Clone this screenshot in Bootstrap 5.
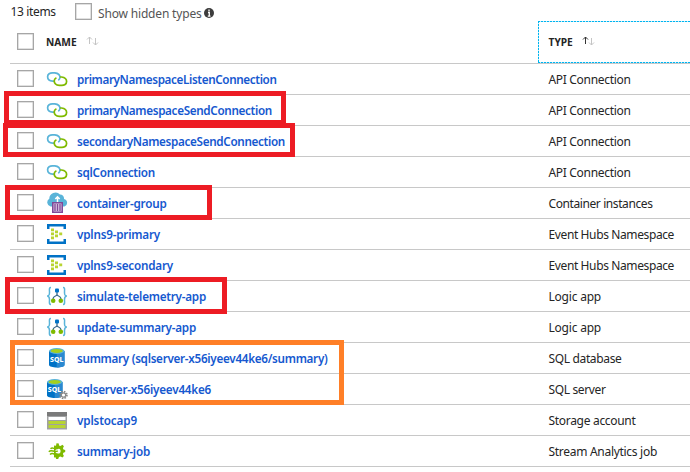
<!DOCTYPE html>
<html lang="en">
<head>
<meta charset="utf-8">
<title>Resources</title>
<link href="https://cdn.jsdelivr.net/npm/bootstrap@5.3.0/dist/css/bootstrap.min.css" rel="stylesheet">
<style>
body{font-family:"Noto Sans","Open Sans",sans-serif;font-size:12px;line-height:16px;color:#252525;width:690px;height:472px;overflow:hidden}
.topbar{height:21px;padding-left:10.5px}
.tick{width:17px;height:17px;border:1px solid #a6a6a6;box-shadow:inset 0 0 0 .5px #c4c4c4;border-radius:0;margin:0;flex:none;display:block;appearance:none;background:#fff}
.topbar .tick{margin-top:3px}
.count{width:64.5px;padding-top:4px;letter-spacing:-.35px}
.hidden-label{color:#555;padding:6px 2px 0 6px;letter-spacing:-.17px}
.grid-area{margin-left:10px}
.line{border-bottom:1px solid #c8c8c8;height:31px;padding-left:7px}
.line .tick{margin-top:6px}
.head-line{height:43px;font-weight:700;font-size:10.2px}
.head-line .tick{margin-top:12px}
.head-text{line-height:16px;padding-top:13px}
.col-head{width:521px;flex:none}
.col-name{width:531.5px;flex:none}
.glyph{width:22px;height:22px;margin:4px 9px 0 12px;flex:none}
.res,.kind{white-space:nowrap;padding-top:8px}
.res{color:#1558cf;font-size:11.7px;font-weight:600;text-decoration:none;padding-top:7px}
.arrows{margin:15px 0 0 9px}
.type-head{height:42px;width:152px;flex:1 0 auto;padding-left:10.5px;
background:repeating-linear-gradient(90deg,#00b4f0 0 2px,#c4eefb 2px 3px) 0 0/100% 1px no-repeat,repeating-linear-gradient(90deg,#00b4f0 0 2px,#c4eefb 2px 3px) 0 100%/100% 1px no-repeat,repeating-linear-gradient(#00b4f0 0 2px,#c4eefb 2px 3px) 0 0/1px 100% no-repeat}
.frame{position:absolute;border:5px solid #ed1c24;pointer-events:none}
.f1{left:4px;top:91px;width:282px;height:34px}
.f2{left:3px;top:123px;width:292px;height:34px}
.f3{left:5px;top:185px;width:207px;height:35px}
.f4{left:5px;top:277px;width:222px;height:37px}
.f5{left:10px;top:340px;width:334px;height:65px;border-color:#ff7f27}
</style>
</head>
<body class="position-relative bg-white">
<svg class="d-none">
<symbol id="i-link" viewBox="0 0 22 22"><g fill="none" stroke-width="1.700"><path d="M8 13.200H6.700C3.500 12.800 1.600 11 1.600 8.700 1.600 6.200 3.800 4.700 7 4.900h1.800c3.400.4 5.200 2.200 5.200 4.400 0 1.300-.6 2.200-1.700 2.900" stroke="#59b4d9"/><path d="M14 9h1.600c3.200.4 5 2.200 5 4.500 0 2.600-2.200 4.100-5.400 3.900h-1.800C10 17 8.200 15.200 8.200 13c0-1.400.8-2.500 2.200-3.200" stroke="#7fba00"/></g></symbol>
<symbol id="i-box" viewBox="0 0 22 22"><path d="M4.500 14.500A4.200 4.200 0 0 1 3.300 6.800 6.200 6.200 0 0 1 14 2.500a4 4 0 0 1 4 4.500A3.900 3.900 0 0 1 18.500 14.500z" fill="#59b4d9"/><path d="M11.500 10.500V5M9.300 7l2.200-2.200L13.700 7" stroke="#fff" stroke-width="1.500" fill="none"/><path d="M6 10h11v11H6z" fill="#804998"/><path d="M7.500 11.500h8v8h-8z" fill="#d9c6e2"/><path d="M9 12v7M11.500 12v7M14 12v7" stroke="#804998" stroke-width="1.300"/></symbol>
<symbol id="i-hub" viewBox="0 0 22 22"><path d="M1 6V1h19v5h-2.500V3.500h-14V6zM1 16v5h19v-5h-2.500v2.500h-14V16z" fill="#0072c6"/><path d="M5 5.500h3v2.700H5zM5 9.500h3v2.700H5zM5 13.500h3v2.700H5zM9 7.500h3v2.700H9zM9 11.500h3v2.700H9zM13.200 9.500h3v2.700h-3z" fill="#b8d432"/></symbol>
<symbol id="i-logic" viewBox="0 0 22 22"><path d="M5 2.500C2.800 2.500 3.500 4.500 3.500 7.500S3 10.800 1.200 11C3 11.200 3.500 12 3.500 14.500S2.800 19.500 5 19.500M17 2.500c2.200 0 1.500 2 1.500 5s.5 3.300 2.300 3.500c-1.800.2-2.300 1-2.300 3.500s.7 5-1.500 5" fill="none" stroke="#59b4d9" stroke-width="1.500"/><path d="M11 6v3.500c0 2-4 1-4 4.500m4-4.500c0 2 4 1 4 4.500" fill="none" stroke="#3d6b8c" stroke-width="1.300"/><rect x="9" y="3.500" width="4" height="4" rx="1" fill="#0072c6"/><circle cx="7.200" cy="15.700" r="2.300" fill="#7fba00"/><circle cx="14.800" cy="15.700" r="2.300" fill="#7fba00"/></symbol>
<symbol id="i-sql" viewBox="0 0 22 22"><path d="M3 4v14c0 3.300 15.500 3.300 15.500 0V4z" fill="#0072c6"/><path d="M10.700 4v16.500c5 0 7.800-1 7.800-2.500V4z" fill="#2a88d0"/><ellipse cx="10.750" cy="4" rx="7.750" ry="2.900" fill="#59b4d9"/><ellipse cx="10.750" cy="3.900" rx="6" ry="2" fill="#a4cf20"/><text x="10.800" y="15" text-anchor="middle" font-family="Noto Sans" font-size="7" font-weight="800" fill="#fff">SQL</text></symbol>
<symbol id="i-server" viewBox="0 0 22 22"><path d="M1 4v13.500c0 3.300 15.500 3.300 15.500 0V4z" fill="#0072c6"/><path d="M8.700 4v16c5 0 7.800-1 7.800-2.500V4z" fill="#2a88d0"/><ellipse cx="8.750" cy="4" rx="7.750" ry="2.900" fill="#59b4d9"/><ellipse cx="8.750" cy="3.900" rx="6" ry="2" fill="#a4cf20"/><text x="8.500" y="14" text-anchor="middle" font-family="Noto Sans" font-size="7" font-weight="800" fill="#fff">SQL</text><circle cx="17.500" cy="17" r="3.400" fill="none" stroke="#888" stroke-width="1.700" stroke-dasharray="1.550 1.120"/><circle cx="17.500" cy="17" r="2.200" fill="#fff" stroke="#888" stroke-width="1.200"/></symbol>
<symbol id="i-store" viewBox="0 0 22 22"><path d="M1 3h20v17.500H1z" fill="#a0a1a2"/><path d="M1 3h20v4H1z" fill="#7a7a7a"/><path d="M2.500 8h17v3h-17z" fill="#fff"/><path d="M2.500 12h17v3h-17zM2.500 16h17v3h-17z" fill="#b8d432"/></symbol>
<symbol id="i-stream" viewBox="0 0 22 22"><path d="m8 5.500 2 .2L10.500 3.200l2.300.3.200 2 1.500.6 1.900-1.300 1.500 1.500-1 2 .6 1.300 1.700.4v2l-1.800.7-.5 1.400 1 1.800-1.500 1.500-1.900-.9-1.500.6L12.200 19h-2l-.7-1.800-1.500.2z" fill="#7fba00"/><circle cx="12" cy="11" r="2.600" fill="#fff"/><path d="M4.500 8.800C7 6.500 8.500 10.300 12.500 8M2.800 11.700c3-3 5 1.500 9-.9M4 14.500c3-2.700 5 1.300 7.500-.8" fill="none" stroke="#7fba00" stroke-width="1.500"/></symbol>
</svg>
<div class="topbar d-flex align-items-start"><div class="count">13 items</div><input type="checkbox" class="tick"><div class="hidden-label">Show hidden types</div><svg width="10" height="10" viewBox="0 0 10 10" class="mt-2"><circle cx="5" cy="5" r="5" fill="#3c3c3c"/><path d="M5 1.500v1.700M4 4.500h1.300v3.700M3.800 8.200h2.700" stroke="#fff" stroke-width="1.300" fill="none"/></svg></div>
<main class="grid-area">
<div class="line head-line d-flex align-items-start"><div class="col-head d-flex align-items-start"><input type="checkbox" class="tick"><span class="head-text ms-2 ps-1">NAME</span><svg class="arrows" width="14" height="10" viewBox="0 0 14 10" fill="none" stroke="#c4c4c4"><path d="M3.500 8V1M1 3.500 3.500 1 6 3.500M9.500 2v7M7 6.500 9.500 9 12 6.500"/></svg></div><div class="type-head d-flex align-items-start"><span class="head-text">TYPE</span><svg class="arrows" width="14" height="10" viewBox="0 0 14 10" fill="none"><path d="M3.500 8V1M1 3.500 3.500 1 6 3.500" stroke="#333"/><path d="M9.500 2v7M7 6.500 9.500 9 12 6.500" stroke="#c4c4c4"/></svg></div></div>
<div id="rows"></div>
</main>
<div class="frame f1"></div><div class="frame f2"></div><div class="frame f3"></div><div class="frame f4"></div><div class="frame f5"></div>
<script src="https://cdn.jsdelivr.net/npm/bootstrap@5.3.0/dist/js/bootstrap.bundle.min.js"></script>
<script>
// icon, name, name width, type, type width
const data=[
["link","primaryNamespaceListenConnection",199.5,"API Connection",82],
["link","primaryNamespaceSendConnection",195,"API Connection",82],
["link","secondaryNamespaceSendConnection",208,"API Connection",82],
["link","sqlConnection",78,"API Connection",82],
["box","container-group",89.5,"Container instances",104],
["hub","vplns9-primary",83,"Event Hubs Namespace",125.5],
["hub","vplns9-secondary",96,"Event Hubs Namespace",125.5],
["logic","simulate-telemetry-app",129,"Logic app",52.5],
["logic","update-summary-app",119,"Logic app",52.5],
["sql","summary (sqlserver-x56iyeev44ke6/summary)",250.5,"SQL database",73],
["server","sqlserver-x56iyeev44ke6",134,"SQL server",57],
["store","vplstocap9",60,"Storage account",87],
["stream","summary-job",73,"Stream Analytics job",108.5]];
document.getElementById("rows").innerHTML=data.map(r=>`<div class="line d-flex align-items-start"><div class="col-name d-flex align-items-start"><input type="checkbox" class="tick"><svg class="glyph"><use href="#i-${r[0]}"/></svg><a class="res" data-width="${r[2]}">${r[1]}</a></div><span class="kind" data-width="${r[4]}">${r[3]}</span></div>`).join("");
document.querySelectorAll("[data-width]").forEach(e=>{
  e.style.letterSpacing=(e.dataset.width-e.getBoundingClientRect().width)/e.textContent.length+"px";
});
</script>
</body>
</html>
